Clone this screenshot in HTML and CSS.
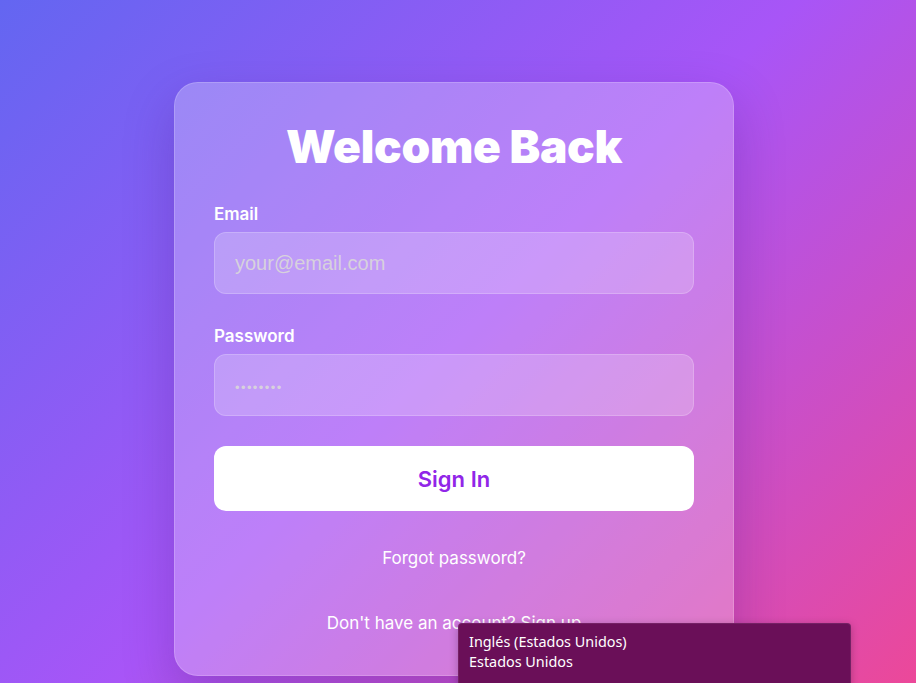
FILE: index.html
```html
<!DOCTYPE html>
<html lang="en">
<head>
<meta charset="utf-8">
<title>Welcome Back</title>
<link rel="stylesheet" href="styles.css">
</head>
<body>
<main class="page">
  <form class="card">
    <h1 class="title">Welcome Back</h1>
    <label class="field">
      <span class="label">Email</span>
      <input class="input" type="email" placeholder="your@email.com">
    </label>
    <label class="field field-last">
      <span class="label">Password</span>
      <input class="input input-pass" type="password" placeholder="••••••••">
    </label>
    <button class="btn" type="button">Sign In</button>
    <a class="link forgot" href="#">Forgot password?</a>
    <p class="link signup">Don't have an account? Sign up</p>
  </form>
</main>
<div class="ime-tip">
  <div>Inglés (Estados Unidos)</div>
  <div>Estados Unidos</div>
</div>
</body>
</html>
```
FILE: styles.css
```css
* { box-sizing: border-box; }
html, body { margin: 0; height: 100%; }
body {
  font-family: Inter, "Liberation Sans", sans-serif;
  background: linear-gradient(135deg, #6366f1 0%, #a855f7 50%, #ec4899 100%);
  overflow: hidden;
}
.page {
  display: flex;
  justify-content: center;
  padding-top: 82px;
  padding-right: 8px;
}
.card {
  width: 560px;
  height: 594px;
  padding: 37px 39px 40px;
  border-radius: 24px;
  background: rgba(255,255,255,0.25);
  border: 1px solid rgba(255,255,255,0.18);
  box-shadow: 0 20px 50px rgba(60, 20, 120, 0.25);
  display: flex;
  flex-direction: column;
}
.title {
  margin: 0 0 32px;
  text-align: center;
  color: #fff;
  font-size: 46px;
  font-weight: 900;
  letter-spacing: -0.3px;
  line-height: 52px;
}
.field {
  display: flex;
  flex-direction: column;
  margin-bottom: 32px;
}
.field-last { margin-bottom: 30px; }
.label {
  color: #fff;
  font-size: 17px;
  font-weight: 600;
  line-height: 20px;
  margin-bottom: 8px;
}
.input {
  height: 62px;
  border-radius: 12px;
  border: 1px solid rgba(255,255,255,0.2);
  background: rgba(255,255,255,0.2);
  padding: 0 20px;
  font-family: "Liberation Sans", Arial, sans-serif;
  font-size: 20px;
  color: #fff;
  outline: none;
}
.input::placeholder { color: rgba(220,220,215,0.85); }
.input-pass::placeholder { font-size: 13px; letter-spacing: 1.4px; }
.btn {
  height: 65px;
  border: 0;
  border-radius: 12px;
  background: #fff;
  color: #9126e8;
  font-family: Inter, "Liberation Sans", sans-serif;
  font-size: 22px;
  font-weight: 600;
}
.link {
  color: #fff;
  text-align: center;
  font-size: 17px;
  text-decoration: none;
  margin: 0;
}
.forgot { margin-top: 37px; }
.signup { margin-top: 45px; }
.ime-tip {
  position: absolute;
  left: 458px;
  top: 623px;
  width: 393px;
  height: 70px;
  background: #6a0f58;
  border-radius: 4px;
  border: 1px solid rgba(255,255,255,0.08);
  box-shadow: 0 2px 8px rgba(0,0,0,0.25);
  color: #fff;
  font-family: "Noto Sans", "Open Sans", sans-serif;
  font-size: 14.4px;
  line-height: 20px;
  padding: 8px 10px;
}
```
